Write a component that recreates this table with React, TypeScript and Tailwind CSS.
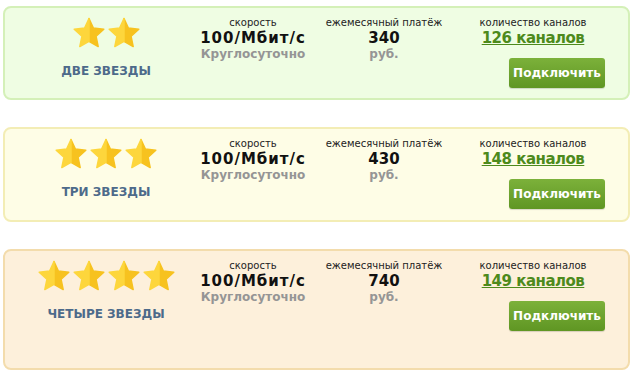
import React from "react";

const font = { fontFamily: '"DejaVu Sans", Verdana, sans-serif' };

function Star() {
  return (
    <svg width="34" height="32" viewBox="0 0 34 32">
      <path
        d="M17 1.5 L21.4 11 L31.8 12.2 L24.1 19.3 L26.2 29.6 L17 24.4 Z"
        fill="#f7c21f"
        stroke="#f7c21f"
        strokeWidth="1.5"
        strokeLinejoin="round"
      />
      <path
        d="M17 1.5 L12.6 11 L2.2 12.2 L9.9 19.3 L7.8 29.6 L17 24.4 Z"
        fill="#fdd63c"
        stroke="#fdd63c"
        strokeWidth="1.5"
        strokeLinejoin="round"
      />
    </svg>
  );
}

type Plan = {
  stars: number;
  label: string;
  price: string;
  channels: string;
  bg: string;
  border: string;
  height: string;
};

function Card({ p }: { p: Plan }) {
  return (
    <div
      className={`flex rounded-[8px] border-2 ${p.bg} ${p.border} ${p.height}`}
    >
      <div className="w-[202px] flex flex-col items-center pt-[9px]">
        <div className="flex gap-[1px]">
          {Array.from({ length: p.stars }).map((_, i) => (
            <Star key={i} />
          ))}
        </div>
        <div className="mt-[15px] text-[12px] leading-[14px] font-bold text-[#4d6a8a] whitespace-nowrap">
          {p.label}
        </div>
      </div>
      <div className="w-[92px] flex flex-col items-center pt-[9px]">
        <div className="text-[10px] leading-[12px] text-[#222] whitespace-nowrap">скорость</div>
        <div className="text-[15px] leading-[18px] font-bold text-[#111] whitespace-nowrap tracking-[1px]">100/Мбит/с</div>
        <div className="text-[12px] leading-[14px] font-bold text-[#959595] whitespace-nowrap">Круглосуточно</div>
      </div>
      <div className="w-[170px] flex flex-col items-center pt-[9px]">
        <div className="text-[10px] leading-[12px] text-[#222] whitespace-nowrap">ежемесячный платёж</div>
        <div className="text-[15px] leading-[18px] font-bold text-[#111]">{p.price}</div>
        <div className="text-[12px] leading-[14px] font-bold text-[#959595]">руб.</div>
      </div>
      <div className="flex flex-col pt-[9px]">
        <div className="w-[128px] flex flex-col items-center">
          <div className="text-[10px] leading-[12px] text-[#222] whitespace-nowrap">количество каналов</div>
          <div className="text-[15px] leading-[18px] font-bold text-[#4d8a1c] underline whitespace-nowrap tracking-[-0.5px]">
            {p.channels}
          </div>
        </div>
        <button className="ml-[40px] mt-[11px] w-[96px] h-[30px] rounded-[3px] bg-gradient-to-b from-[#7cb13a] to-[#5f9623] text-white text-[12px] font-bold shadow-[0_1px_1px_rgba(0,0,0,0.15)]">
          Подключить
        </button>
      </div>
    </div>
  );
}

export default function App() {
  const plans: Plan[] = [
    { stars: 2, label: "ДВЕ ЗВЕЗДЫ", price: "340", channels: "126 каналов", bg: "bg-[#effde3]", border: "border-[#d4f0b8]", height: "h-[94px]" },
    { stars: 3, label: "ТРИ ЗВЕЗДЫ", price: "430", channels: "148 каналов", bg: "bg-[#fefde6]", border: "border-[#f3edb5]", height: "h-[95px]" },
    { stars: 4, label: "ЧЕТЫРЕ ЗВЕЗДЫ", price: "740", channels: "149 каналов", bg: "bg-[#fdf0db]", border: "border-[#f3dcac]", height: "h-[121px]" },
  ];
  return (
    <div style={font} className="w-[637px] h-[374px] bg-white pl-[3px] pr-[7px] pt-[6px] flex flex-col gap-[27px]">
      {plans.map((p) => (
        <Card key={p.label} p={p} />
      ))}
    </div>
  );
}
